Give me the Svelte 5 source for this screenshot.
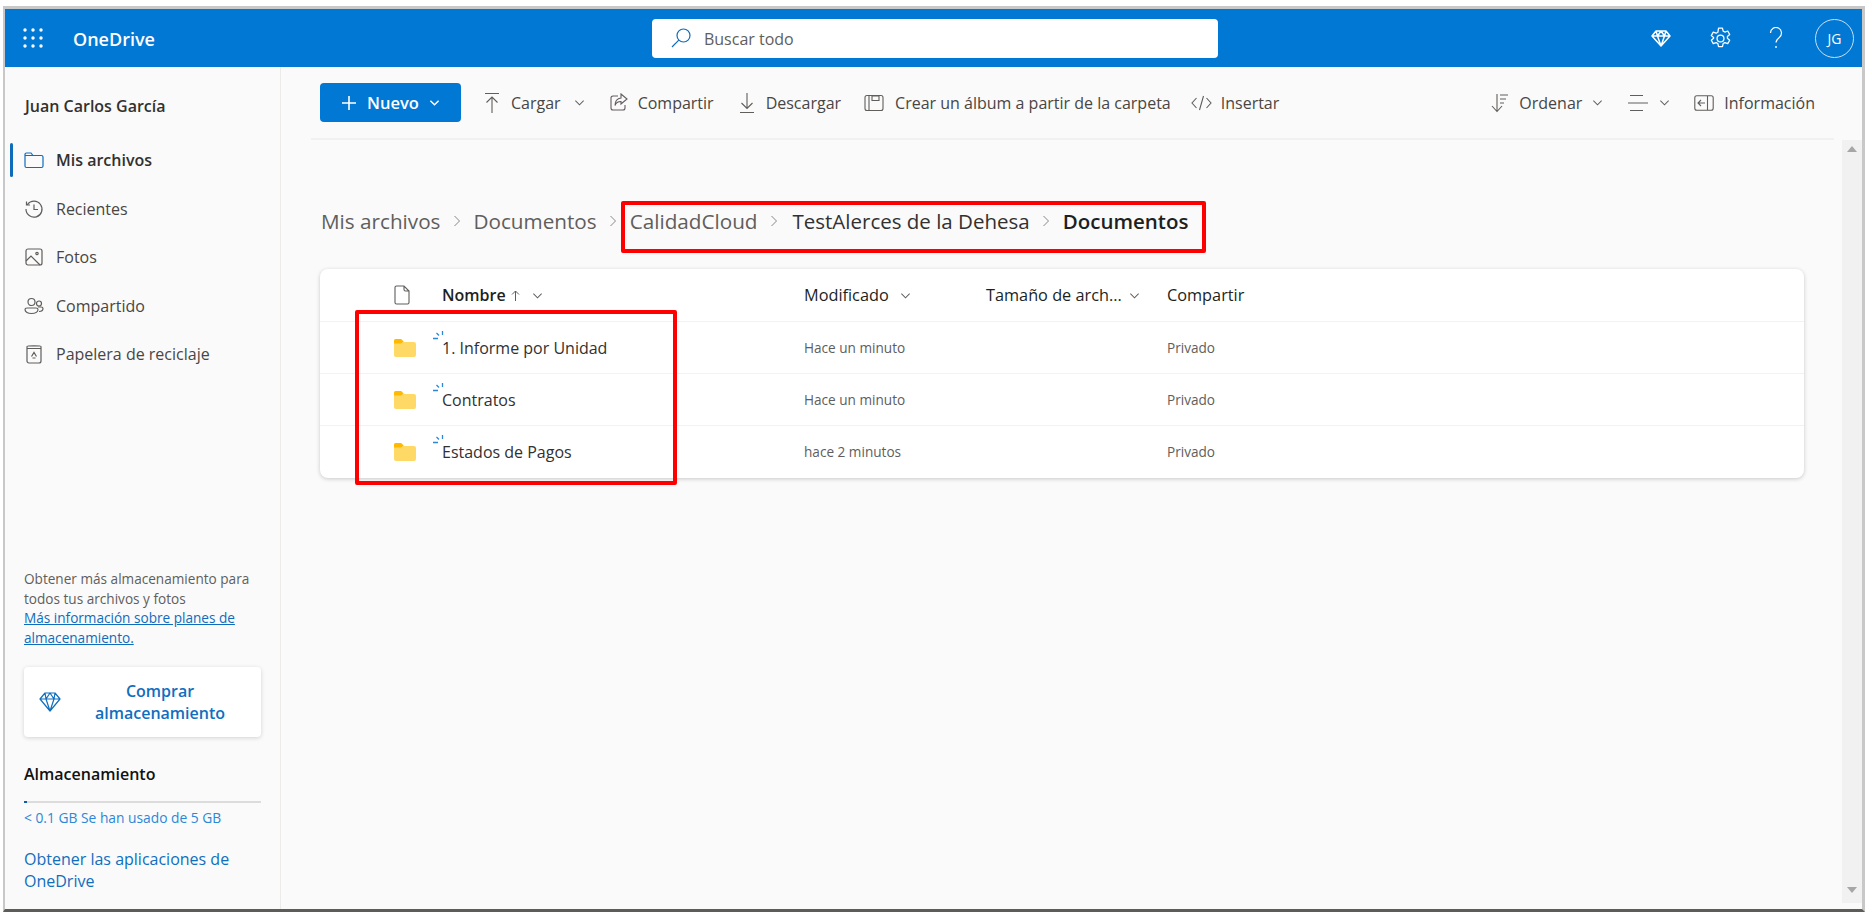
<script lang="ts">
	const nav = [
		{ label: 'Mis archivos', icon: 'folder', active: true },
		{ label: 'Recientes', icon: 'recent' },
		{ label: 'Fotos', icon: 'photo' },
		{ label: 'Compartido', icon: 'people' },
		{ label: 'Papelera de reciclaje', icon: 'bin' }
	];

	const rows = [
		{ name: '1. Informe por Unidad', modified: 'Hace un minuto' },
		{ name: 'Contratos', modified: 'Hace un minuto' },
		{ name: 'Estados de Pagos', modified: 'hace 2 minutos' }
	];
</script>

{#snippet chevron()}
	<svg class="chev" width="11" height="11" viewBox="0 0 12 12" fill="none" stroke="currentColor" stroke-width="1.1"><path d="M1.5 4l4.5 4.5L10.500 4" /></svg>
{/snippet}

{#snippet sep()}
	<svg class="sep" width="10" height="14" viewBox="0 0 10 14" fill="none" stroke="#8a8886" stroke-width="1"><path d="M2.500 2l5 5-5 5" /></svg>
{/snippet}

{#snippet spinner()}
	<svg class="spinner" width="11" height="10" viewBox="0 0 11 10" fill="none" stroke="#2b88d8" stroke-width="1.300"><path d="M0 7.500h5M3.500 2l2.500 2.500M9.500 0v4" /></svg>
{/snippet}

{#snippet folderIcon()}
	<svg width="22" height="18" viewBox="0 0 22 18"><path d="M0 2a2 2 0 0 1 2-2h5l3 3h10a2 2 0 0 1 2 2v11a2 2 0 0 1-2 2H2a2 2 0 0 1-2-2z" fill="#ffd966" /><path d="M0 2a2 2 0 0 1 2-2h5l2.500 2.500L7 4.500H0z" fill="#ffb900" /></svg>
{/snippet}

<div class="frame">
	<header class="topbar">
		<svg class="waffle" width="20" height="20" viewBox="0 0 20 20" fill="#fff">
			{#each [2, 10, 18] as cy}
				{#each [2, 10, 18] as cx}
					<circle {cx} {cy} r="1.700" />
				{/each}
			{/each}
		</svg>
		<span class="brand">OneDrive</span>
		<div class="search">
			<svg width="22" height="22" viewBox="0 0 22 22" fill="none" stroke="#0f6cbd" stroke-width="1.200"><circle cx="13.500" cy="8.500" r="6.500" /><path d="M8.800 13.200L2 20" /></svg>
			<span>Buscar todo</span>
		</div>
		<div class="top-icons">
			<svg width="20" height="20" viewBox="0 0 20 20" fill="none" stroke="#fff" stroke-width="1.500" stroke-linejoin="round"><path d="M5 3h10l4 5-9 10L1 8zM1 8h18M6.500 8L10 18l3.500-10M5 3l1.500 5L10 3l3.500 5L15 3" /></svg>
			<svg class="gear" width="23" height="23" viewBox="0 0 20 20" fill="none" stroke="#fff" stroke-width="1.100" stroke-linejoin="round"><circle cx="10" cy="10" r="3" /><path d="M8.300 1h3.400l.6 2.600 1.500.8 2.500-.9 1.700 3-2 1.700v1.600l2 1.700-1.700 3-2.500-.9-1.500.8-.6 2.600H8.300l-.6-2.600-1.500-.8-2.500.9-1.700-3 2-1.700V9.200l-2-1.700 1.700-3 2.500.9 1.500-.8z" /></svg>
			<svg width="14" height="22" viewBox="0 0 14 22" fill="none" stroke="#fff" stroke-width="1.200"><path d="M1.500 6a5.500 5.500 0 1 1 8.800 4.400C8.200 12 7 13 7 15.500" /><circle cx="7" cy="20" r=".9" fill="#fff" stroke="none" /></svg>
			<div class="avatar">JG</div>
		</div>
	</header>

	<div class="body">
		<aside class="sidebar">
			<div class="user">Juan Carlos García</div>
			<nav>
				{#each nav as item}
					<div class="nav-item" class:active={item.active}>
						<svg width="20" height="20" viewBox="0 0 20 20" fill="none" stroke={item.active ? '#0f6cbd' : '#605e5c'} stroke-width="1.200">
							{#if item.icon === 'folder'}
								<path d="M1 4.500A1.500 1.500 0 0 1 2.500 3H7l2 2.500h8.500A1.500 1.500 0 0 1 19 7v9a1.500 1.500 0 0 1-1.500 1.500h-15A1.500 1.500 0 0 1 1 16zM1 5.500h8" />
							{:else if item.icon === 'recent'}
								<path d="M3.500 5.500A8 8 0 1 1 2 10M2.500 2.500v3.500H6M10 5.500V10.500H14" />
							{:else if item.icon === 'photo'}
								<rect x="2" y="2" width="16" height="16" rx="2" /><circle cx="13" cy="6.500" r="1.200" /><path d="M2 14l5-5 9 9" />
							{:else if item.icon === 'people'}
								<circle cx="7.500" cy="6" r="3.500" /><circle cx="15" cy="7.500" r="2.500" /><path d="M1 13.500c0-1 1-1.500 2-1.500h9c1 0 2 .5 2 1.500 0 2.500-3 4-6.500 4S1 16 1 13.500zM14 11h3c1 0 2 .5 2 1.500 0 2-2 3-4 3" />
							{:else}
								<path d="M3 2.500C3 1.500 17 1.500 17 2.500V17a2 2 0 0 1-2 2H5a2 2 0 0 1-2-2zM3 4.500h14M8.500 14h3M7.500 12.500l2.500-4 2.500 4" />
							{/if}
						</svg>
						<span>{item.label}</span>
					</div>
				{/each}
			</nav>

			<div class="side-bottom">
				<p class="promo">Obtener más almacenamiento para todos tus archivos y fotos<br /><a href="#planes">Más información sobre planes de almacenamiento.</a></p>
				<div class="buy">
					<svg width="22" height="20" viewBox="0 0 22 20" fill="none" stroke="#106ebe" stroke-width="1.200" stroke-linejoin="round"><path d="M6 1h10l5 6-10 12L1 7zM1 7h20M7 7l4 12 4-12M6 1l1 6 4-6 4 6 1-6" /></svg>
					<span>Comprar almacenamiento</span>
				</div>
				<div class="storage-title">Almacenamiento</div>
				<div class="bar"><div class="bar-fill" style="width: 3px"></div></div>
				<div class="storage-used">&lt; 0.1 GB Se han usado de 5 GB</div>
				<div class="apps">Obtener las aplicaciones de OneDrive</div>
			</div>
		</aside>

		<main class="main">
			<div class="toolbar">
				<button class="new" type="button">
					<svg width="16" height="16" viewBox="0 0 16 16" stroke="#fff" stroke-width="1.600"><path d="M8 1v14M1 8h14" /></svg>
					<span>Nuevo</span>
					<svg width="11" height="11" viewBox="0 0 12 12" fill="none" stroke="#fff" stroke-width="1.600"><path d="M1.500 4l4.500 4.500L10.500 4" /></svg>
				</button>
				<div class="tool t-upload">
					<svg width="16" height="22" viewBox="0 0 16 22" fill="none" stroke="#605e5c" stroke-width="1.100"><path d="M1 1.500h14M8 21V5M2.500 10.500L8 5l5.500 5.500" /></svg>
					<span>Cargar</span>
					{@render chevron()}
				</div>
				<div class="tool t-share">
					<svg width="18" height="20" viewBox="0 0 18 20" fill="none" stroke="#605e5c" stroke-width="1.100"><path d="M8 3H3a2 2 0 0 0-2 2v10a2 2 0 0 0 2 2h10a2 2 0 0 0 2-2v-3M11 1l6 5-6 5V8.500c-3 0-5 1-6 4 0-4 2-7 6-7.500z" /></svg>
					<span>Compartir</span>
				</div>
				<div class="tool t-down">
					<svg width="16" height="22" viewBox="0 0 16 22" fill="none" stroke="#605e5c" stroke-width="1.100"><path d="M8 1v15M2.500 11L8 16.500 13.500 11M1 20.500h14" /></svg>
					<span>Descargar</span>
				</div>
				<div class="tool t-album">
					<svg width="20" height="18" viewBox="0 0 20 18" fill="none" stroke="#605e5c" stroke-width="1.100"><rect x="1" y="1.500" width="18" height="15" rx="2" /><path d="M5 1.500v15M8 2h7v4.500H8z" /></svg>
					<span>Crear un álbum a partir de la carpeta</span>
				</div>
				<div class="tool t-embed">
					<svg width="21" height="16" viewBox="0 0 21 16" fill="none" stroke="#605e5c" stroke-width="1.100"><path d="M5.500 3L1 8l4.500 5M15.500 3L20 8l-4.500 5M12.500 1L8.500 15" /></svg>
					<span>Insertar</span>
				</div>
				<div class="tool-right">
					<div class="tool t-sort">
						<svg width="18" height="20" viewBox="0 0 18 20" fill="none" stroke="#605e5c" stroke-width="1.100"><path d="M6 1v17M1 13l5 5.500 5-5.500M9 2h8M9 6h6M9 10h4" /></svg>
						<span>Ordenar</span>
						{@render chevron()}
					</div>
					<div class="tool t-view">
						<svg width="20" height="18" viewBox="0 0 20 18" fill="none" stroke="#605e5c" stroke-width="1.100"><path d="M2 1.500h13M0 9h20M2 16.500h13" /></svg>
						{@render chevron()}
					</div>
					<div class="tool">
						<svg width="20" height="16" viewBox="0 0 20 16" fill="none" stroke="#605e5c" stroke-width="1.100"><rect x=".8" y=".8" width="18.400" height="14.400" rx="2" /><path d="M13.500 1v14M11 8H4M7 5L4 8l3 3" /></svg>
						<span>Información</span>
					</div>
				</div>
			</div>

			<div class="scroll-area">
				<div class="content">
					<div class="crumbs">
						<span>Mis archivos</span>
						{@render sep()}
						<span>Documentos</span>
						{@render sep()}
						<span>CalidadCloud</span>
						{@render sep()}
						<span class="dark">TestAlerces de la Dehesa</span>
						{@render sep()}
						<span class="current">Documentos</span>
						<div class="mark mark-crumbs"></div>
					</div>

					<div class="card">
						<div class="row head">
							<div class="c-icon">
								<svg width="16" height="20" viewBox="0 0 16 20" fill="none" stroke="#605e5c" stroke-width="1.100"><path d="M1 2.500A1.500 1.500 0 0 1 2.500 1H10l5 5v11.500a1.500 1.500 0 0 1-1.500 1.500h-11A1.500 1.500 0 0 1 1 17.500zM10 1v3.500A1.500 1.500 0 0 0 11.500 6H15" /></svg>
							</div>
							<div class="c-name strong">
								<span>Nombre</span>
								<svg class="arrow" width="9" height="11" viewBox="0 0 9 11" fill="none" stroke="#605e5c"><path d="M4.500 11V1M1 4.500L4.500 1 8 4.500" /></svg>
								{@render chevron()}
							</div>
							<div class="c-mod">Modificado {@render chevron()}</div>
							<div class="c-size">Tamaño de arch... {@render chevron()}</div>
							<div class="c-share">Compartir</div>
						</div>
						{#each rows as row}
							<div class="row">
								<div class="c-icon">{@render folderIcon()}</div>
								<div class="c-name">{@render spinner()}{row.name}</div>
								<div class="c-mod small">{row.modified}</div>
								<div class="c-size"></div>
								<div class="c-share small">Privado</div>
							</div>
						{/each}
						<div class="mark mark-rows"></div>
					</div>
				</div>
				<div class="scrollbar">
					<svg width="10" height="6" viewBox="0 0 10 6" fill="#a6a6a6"><path d="M5 0l5 6H0z" /></svg>
					<svg width="10" height="6" viewBox="0 0 10 6" fill="#a6a6a6"><path d="M0 0h10L5 6z" /></svg>
				</div>
			</div>
		</main>
	</div>
</div>

<style>
	:global(body) {
		margin: 0;
		background: #fff;
		font-family: 'Open Sans', 'Noto Sans', sans-serif;
		color: #323130;
	}

	.frame {
		box-sizing: border-box;
		width: 1862px;
		height: 906px;
		margin: 6px 0 0 3px;
		display: flex;
		flex-direction: column;
		background: #fafafa;
		border: solid #c8c8c8;
		border-width: 3px 3px 0 2px;
		border-bottom: 3px solid #5c5c58;
		overflow: hidden;
	}

	.topbar {
		flex: none;
		height: 58px;
		background: #0078d4;
		display: flex;
		align-items: center;
		color: #fff;
		padding-left: 18px;
	}

	.brand {
		margin-left: 30px;
		padding-top: 2px;
		font-size: 18px;
		font-weight: 600;
	}

	.search {
		box-sizing: border-box;
		width: 566px;
		height: 39px;
		margin-left: 497px;
		background: #fff;
		border-radius: 4px;
		display: flex;
		align-items: center;
		gap: 12px;
		padding-left: 18px;
		color: #605e5c;
		font-size: 16px;
	}

	.search span {
		padding-top: 2px;
	}

	.top-icons {
		margin-left: auto;
		display: flex;
		align-items: center;
		gap: 37px;
		padding-right: 8px;
	}

	.top-icons svg:first-child {
		margin-right: 1px;
	}

	.avatar {
		box-sizing: border-box;
		width: 39px;
		height: 39px;
		margin-left: -5px;
		border: 1px solid #c7e0f4;
		border-radius: 50%;
		display: flex;
		align-items: center;
		justify-content: center;
		font-size: 14px;
	}

	.body {
		flex: 1;
		min-height: 0;
		display: flex;
	}

	.sidebar {
		box-sizing: border-box;
		flex: none;
		width: 276px;
		border-right: 1px solid #edebe9;
		display: flex;
		flex-direction: column;
		padding-bottom: 17px;
	}

	.user {
		margin: 28px 0 0 20px;
		font-size: 16px;
		font-weight: 600;
	}

	nav {
		margin-top: 19px;
	}

	.nav-item {
		height: 48.500px;
		display: flex;
		align-items: center;
		gap: 12px;
		padding-left: 19px;
		font-size: 16px;
		color: #484644;
		position: relative;
	}

	.nav-item.active {
		font-weight: 600;
		color: #323130;
	}

	.nav-item.active::before {
		content: '';
		position: absolute;
		left: 5px;
		top: 7px;
		width: 3px;
		height: 34px;
		background: #0f6cbd;
		border-radius: 2px;
	}

	.side-bottom {
		margin-top: auto;
		padding: 0 19px;
	}

	.promo {
		margin: 0;
		font-size: 13.600px;
		line-height: 19.500px;
		color: #605e5c;
	}

	.promo a {
		color: #0f6cbd;
	}

	.buy {
		box-sizing: border-box;
		height: 70px;
		margin-top: 20px;
		background: #fff;
		border-radius: 4px;
		box-shadow: 0 1px 4px rgba(0, 0, 0, 0.16);
		display: flex;
		align-items: center;
		padding: 0 16px 0 15px;
		gap: 14px;
		color: #106ebe;
		font-size: 16px;
		font-weight: 600;
		line-height: 22px;
		text-align: center;
	}

	.buy svg {
		flex: none;
	}

	.storage-title {
		margin-top: 26px;
		font-size: 16px;
		font-weight: 600;
		color: #111;
	}

	.bar {
		height: 2px;
		margin-top: 16px;
		background: #dcdcdc;
	}

	.bar-fill {
		height: 2px;
		background: #0f5ca8;
	}

	.storage-used {
		margin-top: 5px;
		font-size: 13.800px;
		color: #2b88d8;
	}

	.apps {
		margin-top: 21px;
		font-size: 16px;
		line-height: 22px;
		color: #106ebe;
	}

	.main {
		flex: 1;
		min-width: 0;
		display: flex;
		flex-direction: column;
	}

	.toolbar {
		flex: none;
		height: 71px;
		margin: 0 28px 0 30px;
		padding-left: 9px;
		border-bottom: 2px solid #f1f1f1;
		display: flex;
		align-items: center;
		font-size: 16px;
		color: #484644;
	}

	.new {
		width: 141px;
		height: 39px;
		border: 0;
		border-radius: 4px;
		background: #0078d4;
		color: #fff;
		display: flex;
		align-items: center;
		justify-content: center;
		gap: 10px;
		font: 600 16.500px 'Open Sans', sans-serif;
		margin-right: 23px;
	}

	.tool {
		display: flex;
		align-items: center;
		gap: 10px;
		margin-right: 24px;
	}

	.tool span {
		padding-top: 1px;
	}

	.chev {
		flex: none;
		color: #605e5c;
		margin-left: 4px;
	}

	.t-upload {
		gap: 11px;
		margin-right: 25px;
	}

	.t-upload .chev {
		margin-left: 2px;
	}

	.t-share {
		margin-right: 25px;
	}

	.t-down {
		gap: 11px;
		margin-right: 23px;
	}

	.t-album {
		gap: 11px;
		margin-right: 20px;
	}

	.t-embed {
		gap: 9px;
	}

	.t-sort {
		margin-right: 25px;
	}

	.t-sort .chev {
		margin-left: 0;
	}

	.t-view {
		gap: 7px;
	}

	.tool-right {
		margin-left: auto;
		display: flex;
		align-items: center;
	}

	.tool-right .tool:last-child {
		margin-right: 19px;
	}

	.scroll-area {
		flex: 1;
		min-height: 0;
		display: flex;
	}

	.content {
		flex: 1;
		min-width: 0;
		padding: 0 38px 0 39px;
	}

	.scrollbar {
		flex: none;
		width: 20px;
		box-sizing: border-box;
		background: #f1f1f1;
		margin-bottom: 6px;
		display: flex;
		flex-direction: column;
		align-items: center;
		justify-content: space-between;
		padding: 6px 0 10px;
	}

	.crumbs {
		position: relative;
		height: 129px;
		display: flex;
		align-items: center;
		gap: 11.500px;
		font-size: 20.700px;
		color: #605e5c;
		padding: 33px 0 0 1px;
		box-sizing: border-box;
	}

	.crumbs .dark {
		margin-left: 2px;
		color: #323130;
		font-size: 20.500px;
	}

	.crumbs .current {
		color: #201f1e;
		font-size: 20.500px;
		font-weight: 600;
	}

	.sep {
		flex: none;
	}

	.mark {
		position: absolute;
		box-sizing: border-box;
		border: 4px solid #f00;
		border-radius: 2px;
		pointer-events: none;
	}

	.mark-crumbs {
		left: 301px;
		top: 61px;
		width: 585px;
		height: 52px;
	}

	.card {
		position: relative;
		background: #fff;
		border-radius: 8px;
		box-shadow: 0 1px 4px rgba(0, 0, 0, 0.2);
		height: 209px;
	}

	.row {
		height: 52px;
		display: flex;
		align-items: center;
		border-top: 1px solid #f3f2f1;
		box-sizing: border-box;
		font-size: 16px;
	}

	.row.head {
		border-top: 0;
		color: #201f1e;
	}

	.head .strong {
		font-weight: 600;
	}

	.head .c-mod,
	.head .c-size,
	.head .c-share {
		font-weight: 500;
		font-size: 16.300px;
	}

	.c-icon {
		flex: none;
		width: 122px;
		padding-left: 74px;
		box-sizing: border-box;
		display: flex;
	}

	.c-name {
		position: relative;
		flex: none;
		width: 362px;
		display: flex;
		align-items: center;
	}

	.arrow {
		margin: 0 0 0 5px;
	}

	.c-name .chev {
		margin-left: 12px;
	}

	.c-mod .chev {
		margin-left: 7px;
	}

	.c-size .chev {
		margin-left: 3px;
	}

	.spinner {
		position: absolute;
		left: -9px;
		top: -6px;
	}

	.c-mod {
		flex: none;
		width: 182px;
	}

	.c-size {
		flex: none;
		width: 181px;
	}

	.small {
		font-size: 13.600px;
		color: #605e5c;
	}

	.mark-rows {
		left: 35px;
		top: 41px;
		width: 322px;
		height: 175px;
	}
</style>
